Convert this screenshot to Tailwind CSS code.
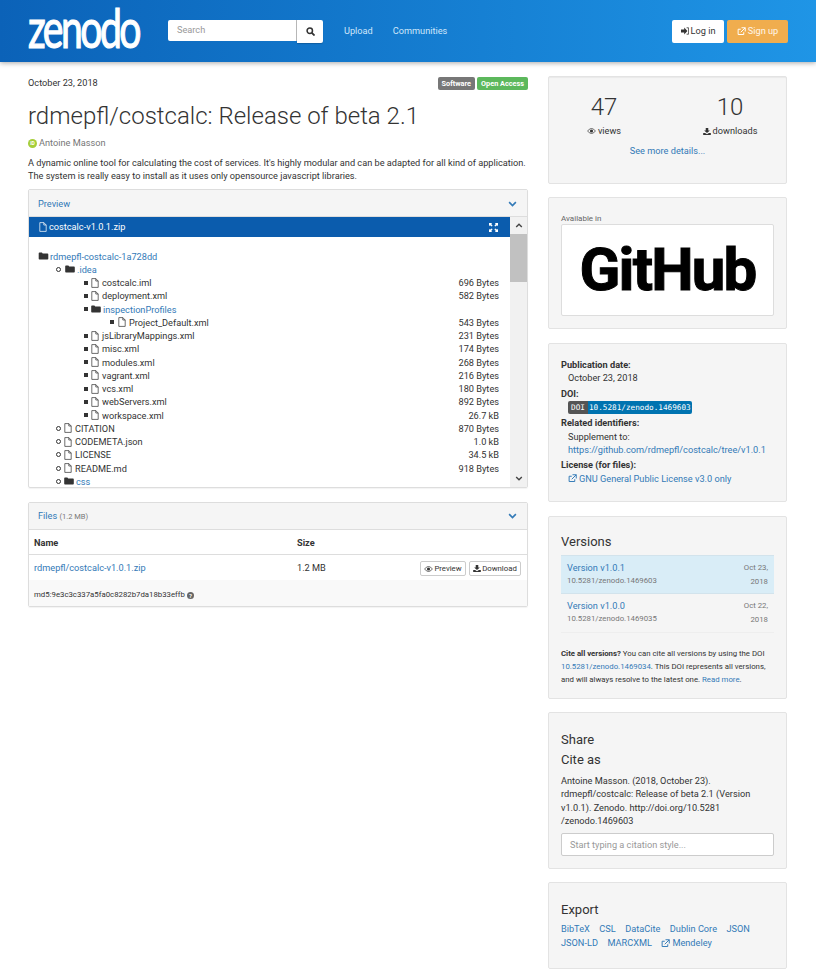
<!doctype html>
<html><head><meta charset="utf-8"><script src="https://cdn.jsdelivr.net/npm/@tailwindcss/browser@4"></script></head>
<body class="bg-white font-['Roboto',sans-serif] text-[9.2px] leading-[14px] text-[#333] overflow-hidden">
<svg class="hidden"><defs>
<symbol id="file" viewBox="0 0 10 12"><path d="M1 .5h5l3 3v8H1zM6 .5v3h3" fill="none" stroke="currentColor" stroke-width=".9"/></symbol>
<symbol id="folder" viewBox="0 0 12 10"><path d="M0 1.500q0-1 1-1h3l1 1.500h6q1 0 1 1v5.500q0 1-1 1H1q-1 0-1-1z" fill="currentColor"/></symbol>
<symbol id="ext" viewBox="0 0 12 12"><path d="M9 7v3H1.500V3h3.500M6 1h5v5M11 1 5 7" fill="none" stroke="currentColor" stroke-width="1.300"/></symbol>
<symbol id="eye" viewBox="0 0 14 10"><path d="M.5 5Q3.500.8 7 .8T13.500 5Q10.500 9.200 7 9.200T.5 5z" fill="none" stroke="currentColor" stroke-width="1.200"/><circle cx="7" cy="5" r="2.600" fill="currentColor"/></symbol>
<symbol id="dl" viewBox="0 0 12 11"><path d="M4 0h4v4h2.500L6 8 1.500 4H4zM0 8h3l3 2 3-2h3v3H0z" fill="currentColor"/></symbol>
<symbol id="chev" viewBox="0 0 12 8"><path d="M1.500 1.500 6 6l4.500-4.500" fill="none" stroke="currentColor" stroke-width="2.200"/></symbol>
</defs></svg>

<header class="h-[62px] bg-gradient-to-r from-[#0b62b8] to-[#1f95e6] shadow-[0_1px_5px_rgba(0,0,0,.35)] flex items-center pl-[28px] pr-[28px] text-white">
  <div class="w-[170px] -mr-[57px] shrink-0 h-[48px] -mt-[7px] origin-left scale-x-[0.725] font-['Lato',sans-serif] text-[54px] leading-[48px] font-normal tracking-[-3.500px] [-webkit-text-stroke:1.200px_white] whitespace-nowrap">zenodo</div>
  <div class="ml-[27px] flex h-[22px]">
    <div class="w-[129px] h-[21px] bg-white rounded-l-[2px] text-[#999] pl-[9px] leading-[20px] border-r border-[#bbb]">Search</div>
    <div class="w-[26px] h-[23px] bg-white rounded-r-[2px] flex items-center justify-center shadow-[0_1px_1px_rgba(0,0,0,.2)]"><svg class="w-[9px] h-[9px]" viewBox="0 0 10 10"><circle cx="4.200" cy="4.200" r="3" fill="none" stroke="#333" stroke-width="1.700"/><path d="m6.500 6.500 3 3" stroke="#333" stroke-width="2"/></svg></div>
  </div>
  <nav class="ml-[21px] flex gap-[20px] text-[#cfe6fa]"><span>Upload</span><span>Communities</span></nav>
  <div class="ml-auto flex gap-[3px] mr-0">
    <div class="w-[52px] h-[23px] bg-white rounded-[2px] text-[#333] flex items-center justify-center gap-[2px]"><svg class="w-[8px] h-[8px]" viewBox="0 0 10 10"><path d="M0 3h4V.5L8 5 4 9.500V7H0z" fill="#333"/><path d="M7 1h2.500v8H7" fill="none" stroke="#333"/></svg>Log in</div>
    <div class="w-[61px] h-[23px] bg-[#f0ad4e] rounded-[2px] text-white/90 flex items-center justify-center gap-[2px]"><svg class="w-[9px] h-[9px] text-white" viewBox="0 0 12 12"><use href="#ext"/></svg>Sign up</div>
  </div>
</header>

<main class="flex items-start pl-[28px] pt-[14px] gap-[20px]">
<div class="w-[500px]">
  <div class="flex justify-between items-start h-[26px]">
    <span class="leading-[14px]">October 23, 2018</span>
    <div class="flex gap-[2px] font-bold text-[7.300px] leading-[13px] text-white mt-[1px]">
      <span class="bg-[#777] rounded-[2px] px-[4px]">Software</span><span class="bg-[#5cb85c] rounded-[2px] px-[4px]">Open Access</span>
    </div>
  </div>
  <h1 class="text-[24px] leading-[28px] font-light h-[33px]">rdmepfl/costcalc: Release of beta 2.1</h1>
  <div class="flex items-center gap-[2px] text-[#777] h-[14px] mt-[1px]"><span class="w-[9px] h-[9px] rounded-full bg-[#a6ce39] flex items-center justify-center text-white text-[5px] leading-none font-bold">iD</span>Antoine Masson</div>
  <p class="mt-[6px] leading-[13px] h-[26px] whitespace-nowrap">A dynamic online tool for calculating the cost of services. It's highly modular and can be adapted for all kind of application.<br>The system is really easy to install as it uses only opensource javascript libraries.</p>

  <section class="mt-[7px] border border-[#ddd] rounded-[2px] shadow-[0_1px_1px_rgba(0,0,0,.05)]">
    <div class="h-[27px] bg-[#f5f5f5] border-b border-[#ddd] flex items-center justify-between pl-[9px] pr-[10px] pt-[1px] text-[#337ab7]"><span>Preview</span><svg class="w-[9px] h-[6px]"><use href="#chev"/></svg></div>
    <div class="flex h-[270px]">
      <div class="flex-1 min-w-0">
        <div class="h-[20px] bg-[#0b5cad] text-white flex items-center justify-between pl-[10px] pr-[12px]">
          <span class="flex items-center gap-[2px]"><svg class="w-[8px] h-[10px]"><use href="#file"/></svg>costcalc-v1.0.1.zip</span>
          <svg class="w-[9px] h-[9px]" viewBox="0 0 10 10"><path d="M0 0h3.500L2.500 1 4 3 3 4 1 2.500 0 3.500zM10 0v3.500L9 2.500 7 4 6 3 7.500 1 6.500 0zM0 10V6.500L1 7.500 3 6l1 1-1.500 2 1 1zM10 10H6.500l1-1L6 7l1-1 2 1.500 1-1z" fill="#fff"/></svg>
        </div>
        <div class="h-[250px] overflow-hidden pt-[12.500px] pr-[11px] leading-[13.250px] text-[#333]">
          <div class="flex h-[13.250px] items-center pl-[9px] gap-[1px] text-[#337ab7]"><svg class="w-[11px] h-[8px] text-[#333]"><use href="#folder"/></svg><span>rdmepfl-costcalc-1a728dd</span></div>
          <div class="flex h-[13.250px] items-center pl-[27px] text-[#337ab7]"><i class="w-[5px] h-[5px] rounded-full border border-[#333] mr-[4px]"></i><svg class="w-[10px] h-[8px] text-[#333] mr-[2px]"><use href="#folder"/></svg><span>.idea</span></div>
          <div class="flex h-[13.250px] items-center pl-[55px]"><i class="w-[4px] h-[4px] bg-[#333] mr-[3px]"></i><svg class="w-[8px] h-[10px] mr-[3px]"><use href="#file"/></svg><span class="flex-1">costcalc.iml</span><span>696 Bytes</span></div>
          <div class="flex h-[13.250px] items-center pl-[55px]"><i class="w-[4px] h-[4px] bg-[#333] mr-[3px]"></i><svg class="w-[8px] h-[10px] mr-[3px]"><use href="#file"/></svg><span class="flex-1">deployment.xml</span><span>582 Bytes</span></div>
          <div class="flex h-[13.250px] items-center pl-[55px] text-[#337ab7]"><i class="w-[4px] h-[4px] bg-[#333] mr-[3px]"></i><svg class="w-[10px] h-[8px] text-[#333] mr-[2px]"><use href="#folder"/></svg><span>inspectionProfiles</span></div>
          <div class="flex h-[13.250px] items-center pl-[81px]"><i class="w-[4px] h-[4px] bg-[#333] mr-[4px]"></i><svg class="w-[8px] h-[10px] mr-[3px]"><use href="#file"/></svg><span class="flex-1">Project_Default.xml</span><span>543 Bytes</span></div>
          <div class="flex h-[13.250px] items-center pl-[55px]"><i class="w-[4px] h-[4px] bg-[#333] mr-[3px]"></i><svg class="w-[8px] h-[10px] mr-[3px]"><use href="#file"/></svg><span class="flex-1">jsLibraryMappings.xml</span><span>231 Bytes</span></div>
          <div class="flex h-[13.250px] items-center pl-[55px]"><i class="w-[4px] h-[4px] bg-[#333] mr-[3px]"></i><svg class="w-[8px] h-[10px] mr-[3px]"><use href="#file"/></svg><span class="flex-1">misc.xml</span><span>174 Bytes</span></div>
          <div class="flex h-[13.250px] items-center pl-[55px]"><i class="w-[4px] h-[4px] bg-[#333] mr-[3px]"></i><svg class="w-[8px] h-[10px] mr-[3px]"><use href="#file"/></svg><span class="flex-1">modules.xml</span><span>268 Bytes</span></div>
          <div class="flex h-[13.250px] items-center pl-[55px]"><i class="w-[4px] h-[4px] bg-[#333] mr-[3px]"></i><svg class="w-[8px] h-[10px] mr-[3px]"><use href="#file"/></svg><span class="flex-1">vagrant.xml</span><span>216 Bytes</span></div>
          <div class="flex h-[13.250px] items-center pl-[55px]"><i class="w-[4px] h-[4px] bg-[#333] mr-[3px]"></i><svg class="w-[8px] h-[10px] mr-[3px]"><use href="#file"/></svg><span class="flex-1">vcs.xml</span><span>180 Bytes</span></div>
          <div class="flex h-[13.250px] items-center pl-[55px]"><i class="w-[4px] h-[4px] bg-[#333] mr-[3px]"></i><svg class="w-[8px] h-[10px] mr-[3px]"><use href="#file"/></svg><span class="flex-1">webServers.xml</span><span>892 Bytes</span></div>
          <div class="flex h-[13.250px] items-center pl-[55px]"><i class="w-[4px] h-[4px] bg-[#333] mr-[3px]"></i><svg class="w-[8px] h-[10px] mr-[3px]"><use href="#file"/></svg><span class="flex-1">workspace.xml</span><span>26.7 kB</span></div>
          <div class="flex h-[13.250px] items-center pl-[27px]"><i class="w-[5px] h-[5px] rounded-full border border-[#333] mr-[3px]"></i><svg class="w-[8px] h-[10px] mr-[3px]"><use href="#file"/></svg><span class="flex-1">CITATION</span><span>870 Bytes</span></div>
          <div class="flex h-[13.250px] items-center pl-[27px]"><i class="w-[5px] h-[5px] rounded-full border border-[#333] mr-[3px]"></i><svg class="w-[8px] h-[10px] mr-[3px]"><use href="#file"/></svg><span class="flex-1">CODEMETA.json</span><span>1.0 kB</span></div>
          <div class="flex h-[13.250px] items-center pl-[27px]"><i class="w-[5px] h-[5px] rounded-full border border-[#333] mr-[3px]"></i><svg class="w-[8px] h-[10px] mr-[3px]"><use href="#file"/></svg><span class="flex-1">LICENSE</span><span>34.5 kB</span></div>
          <div class="flex h-[13.250px] items-center pl-[27px]"><i class="w-[5px] h-[5px] rounded-full border border-[#333] mr-[3px]"></i><svg class="w-[8px] h-[10px] mr-[3px]"><use href="#file"/></svg><span class="flex-1">README.md</span><span>918 Bytes</span></div>
          <div class="flex h-[13.250px] items-center pl-[27px] text-[#337ab7]"><i class="w-[5px] h-[5px] rounded-full border border-[#333] mr-[3px]"></i><svg class="w-[10px] h-[8px] text-[#333] mr-[2px]"><use href="#folder"/></svg><span>css</span></div>
        </div>
      </div>
      <div class="w-[17px] bg-[#f1f1f1] flex flex-col">
        <div class="h-[17px] flex items-center justify-center"><svg class="w-[8px] h-[5px] rotate-180 text-[#444]"><use href="#chev"/></svg></div>
        <div class="h-[48px] bg-[#c1c1c1]"></div>
        <div class="mt-auto h-[17px] flex items-center justify-center"><svg class="w-[8px] h-[5px] text-[#444]"><use href="#chev"/></svg></div>
      </div>
    </div>
  </section>

  <section class="mt-[14px] border border-[#ddd] rounded-[2px] shadow-[0_1px_1px_rgba(0,0,0,.05)]">
    <div class="h-[27px] bg-[#f5f5f5] border-b border-[#ddd] flex items-center justify-between pl-[9px] pr-[10px]"><span class="text-[#337ab7]">Files <span class="text-[#777] text-[7.500px]">(1.2 MB)</span></span><svg class="w-[9px] h-[6px] text-[#337ab7]"><use href="#chev"/></svg></div>
    <div class="h-[25px] border-b border-[#ddd] flex items-center pl-[5px] pt-[1px] font-bold"><span class="w-[263px]">Name</span><span>Size</span></div>
    <div class="flex items-center h-[25px] pl-[5px] pr-[6px]"><span class="w-[263px] text-[#337ab7]">rdmepfl/costcalc-v1.0.1.zip</span><span>1.2 MB</span>
      <div class="ml-auto flex gap-[3px] text-[7.800px] leading-none mt-[2px]">
        <span class="h-[15px] w-[46px] border border-[#ccc] rounded-[2px] bg-white flex items-center justify-center gap-[1px]"><svg class="w-[9px] h-[6px]"><use href="#eye"/></svg>Preview</span>
        <span class="h-[15px] w-[52px] border border-[#ccc] rounded-[2px] bg-white flex items-center justify-center gap-[1px]"><svg class="w-[8px] h-[7px]"><use href="#dl"/></svg>Download</span>
      </div>
    </div>
    <div class="h-[26px] bg-[#f9f9f9] flex items-center pl-[5px] text-[7.800px] pt-[4px] gap-[2px]">md5:9e3c3c337a5fa0c8282b7da18b33effb <span class="w-[7px] h-[7px] rounded-full bg-[#666] text-white text-[6px] leading-[7px] text-center font-bold">?</span></div>
  </section>
</div>

<aside class="w-[239px] flex flex-col">
  <section class="h-[108px] bg-[#f5f5f5] border border-[#e3e3e3] rounded-[2px] shadow-[inset_0_1px_1px_rgba(0,0,0,.05)] text-center pt-[15px]">
    <div class="flex">
      <div class="w-[100px] ml-[5px]"><div class="text-[24px] leading-[30px] font-light">47</div><div class="flex items-center justify-center gap-[2px] mt-[2px]"><svg class="w-[9px] h-[6px]"><use href="#eye"/></svg>views</div></div>
      <div class="w-[100px] ml-[26px]"><div class="text-[24px] leading-[30px] font-light">10</div><div class="flex items-center justify-center gap-[2px] mt-[2px]"><svg class="w-[8px] h-[7px]"><use href="#dl"/></svg>downloads</div></div>
    </div>
    <div class="text-[#337ab7] mt-[6px]">See more details...</div>
  </section>

  <section class="mt-[13px] h-[132px] bg-[#f5f5f5] border border-[#e3e3e3] rounded-[2px] pl-[12px] pr-[12px] pt-[15px]">
    <div class="text-[8px] leading-[12px] text-[#666] -mb-[1px]">Available in</div>
    <div class="h-[92px] bg-white border border-[#ddd] rounded-[2px] flex items-center justify-center text-black font-bold text-[60px] leading-none tracking-[-1.800px] [-webkit-text-stroke:1px_black]">GitHub</div>
  </section>

  <section class="mt-[14px] h-[159px] bg-[#f5f5f5] border border-[#e3e3e3] rounded-[2px] pl-[12px] pt-[14px] leading-[13.400px] whitespace-nowrap">
    <div class="font-bold">Publication date:</div>
    <div class="pl-[7px]">October 23, 2018</div>
    <div class="font-bold mt-[2px]">DOI:</div>
    <div class="pl-[7px] h-[14px] flex items-center font-['DejaVu_Sans_Mono','Liberation_Mono',monospace] text-[7.700px] text-white"><span class="bg-[#555] rounded-l-[2px] px-[3px] h-[13px] leading-[13px]">DOI</span><span class="bg-[#0073b0] rounded-r-[2px] px-[1px] h-[13px] leading-[13px]">10.5281/zenodo.1469603</span></div>
    <div class="font-bold mt-[2px]">Related identifiers:</div>
    <div class="pl-[7px]">Supplement to:</div>
    <div class="pl-[7px] text-[#337ab7]">https://github.com/rdmepfl/costcalc/tree/v1.0.1</div>
    <div class="font-bold mt-[2px]">License (for files):</div>
    <div class="pl-[7px] text-[#337ab7] flex items-center gap-[2px]"><svg class="w-[9px] h-[9px]"><use href="#ext"/></svg>GNU General Public License v3.0 only</div>
  </section>

  <section class="mt-[14px] h-[183px] bg-[#f5f5f5] border border-[#e3e3e3] rounded-[2px] px-[12px] pt-[16px]">
    <div class="text-[13px] leading-[18px] font-normal">Versions</div>
    <div class="mt-[4px] h-[39px] bg-[#d9edf7] border-y border-[#d2e3ec] flex justify-between px-[6px] pt-[5px]"><div><div class="text-[#337ab7] leading-[13px]">Version v1.0.1</div><div class="text-[7.800px] leading-[14px] text-[#777]">10.5281/zenodo.1469603</div></div><div class="text-[7.800px] leading-[14px] text-[#777] text-right">Oct 23,<br>2018</div></div>
    <div class="h-[39px] border-b border-[#eee] flex justify-between px-[6px] pt-[5px]"><div><div class="text-[#337ab7] leading-[13px]">Version v1.0.0</div><div class="text-[7.800px] leading-[14px] text-[#777]">10.5281/zenodo.1469035</div></div><div class="text-[7.800px] leading-[14px] text-[#777] text-right">Oct 22,<br>2018</div></div>
    <p class="mt-[14px] text-[7.800px] leading-[13.200px] whitespace-nowrap"><b>Cite all versions?</b> You can cite all versions by using the DOI<br><span class="text-[#337ab7]">10.5281/zenodo.1469034</span>. This DOI represents all versions,<br>and will always resolve to the latest one. <span class="text-[#337ab7]">Read more</span>.</p>
  </section>

  <section class="mt-[13px] h-[157px] bg-[#f5f5f5] border border-[#e3e3e3] rounded-[2px] px-[12px] pt-[18px]">
    <div class="text-[13px] leading-[18px]">Share</div>
    <div class="text-[13px] leading-[18px] mt-[2px]">Cite as</div>
    <p class="mt-[5px] leading-[13.300px] whitespace-nowrap">Antoine Masson. (2018, October 23).<br>rdmepfl/costcalc: Release of beta 2.1 (Version<br>v1.0.1). Zenodo. http://doi.org/10.5281<br>/zenodo.1469603</p>
    <div class="mt-[6px] h-[23px] bg-white border border-[#ccc] rounded-[2px] pl-[8px] leading-[21px] text-[#999]">Start typing a citation style...</div>
  </section>

  <section class="mt-[13px] h-[87px] bg-[#f5f5f5] border border-[#e3e3e3] rounded-[2px] px-[12px] pt-[18px]">
    <div class="text-[13px] leading-[18px]">Export</div>
    <div class="mt-[3px] text-[#337ab7] leading-[14px]">
      <div class="flex gap-[9.500px]"><span>BibTeX</span><span>CSL</span><span>DataCite</span><span>Dublin Core</span><span>JSON</span></div>
      <div class="flex gap-[9.500px]"><span>JSON-LD</span><span>MARCXML</span><span class="flex items-center gap-[2px]"><svg class="w-[9px] h-[9px]"><use href="#ext"/></svg>Mendeley</span></div>
    </div>
  </section>
</aside>
</main>
</body></html>
